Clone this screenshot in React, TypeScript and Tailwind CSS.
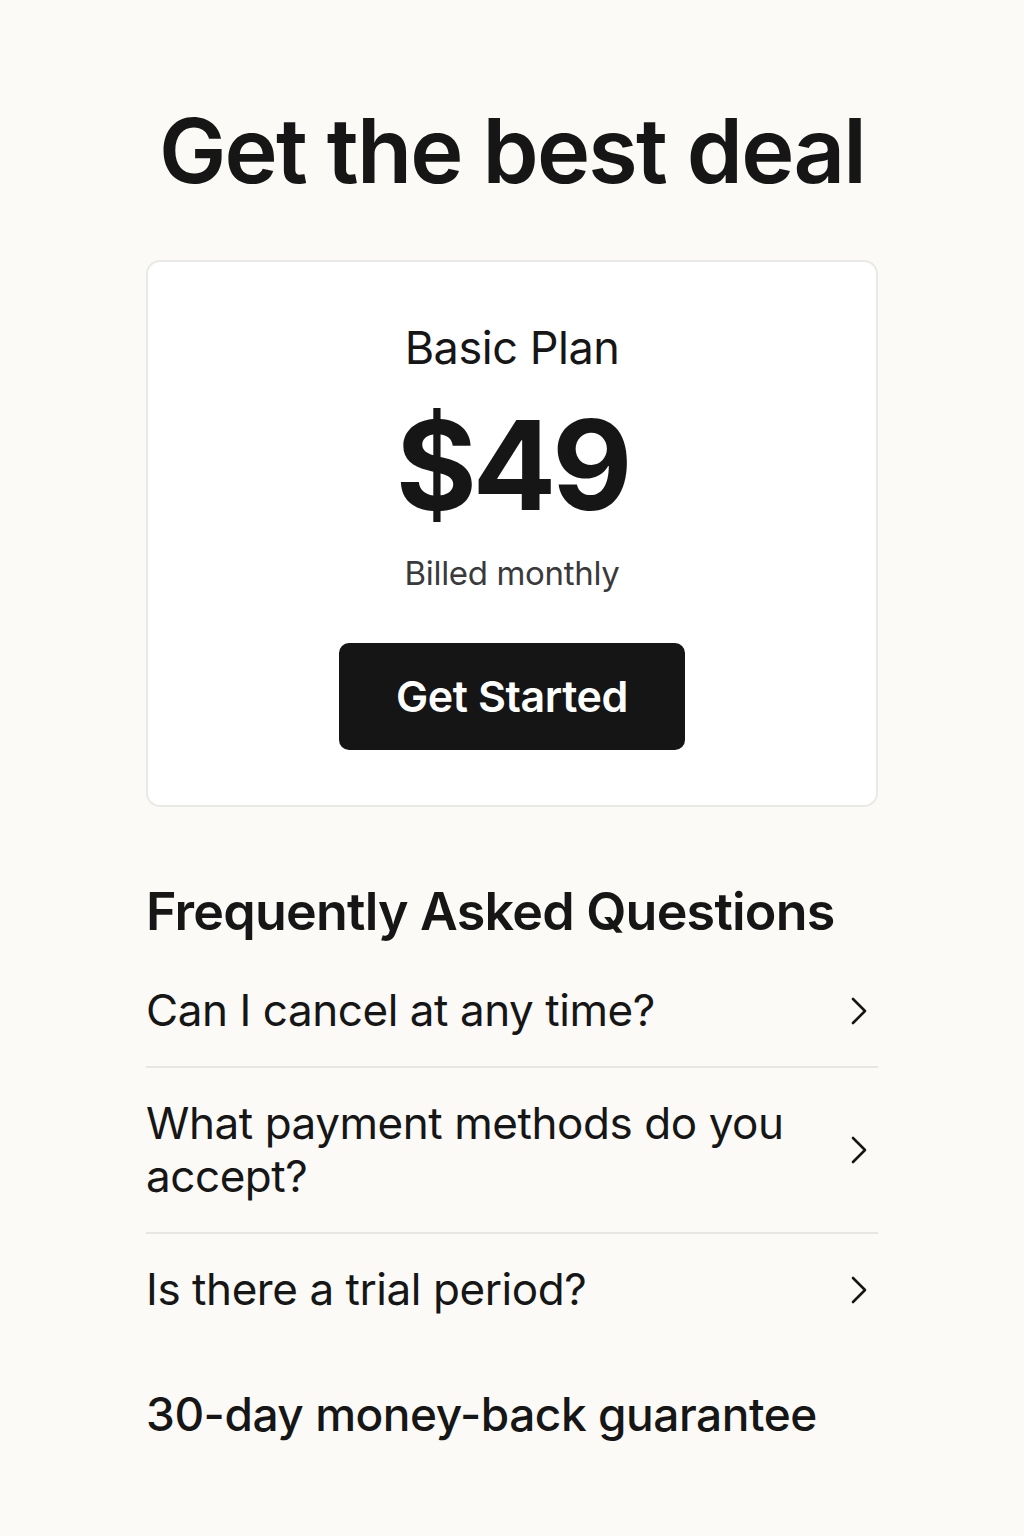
import React from 'react';

const faqs = [
  'Can I cancel at any time?',
  'What payment methods do you accept?',
  'Is there a trial period?',
];

const Chevron = () => (
  <svg width="18" height="30" viewBox="0 0 18 30" fill="none" className="shrink-0">
    <polyline
      points="3,3 15,15 3,27"
      stroke="#161616"
      strokeWidth="2.6"
      strokeLinecap="round"
      strokeLinejoin="round"
    />
  </svg>
);

export default function App() {
  return (
    <div
      className="min-h-[1536px] bg-[#fbfaf7] text-[#161616] pt-[106px] pb-20"
      style={{ fontFamily: 'Inter, "Noto Sans", sans-serif' }}
    >
      <div className="w-[732px] mx-auto">
        {/* Title */}
        <h1 className="text-[90px] font-semibold leading-none tracking-[-0.02em] text-center">
          Get the best deal
        </h1>

        {/* Pricing card */}
        <div className="mt-[64px] bg-white border-2 border-[#e9e9e8] rounded-[14px] flex flex-col items-center pt-[63px] pb-[55px]">
          <h2 className="text-[45px] leading-none font-normal tracking-[-0.01em]">Basic Plan</h2>
          <div className="mt-[33px] text-[124px] leading-none font-bold tracking-[-0.035em]">$49</div>
          <p className="mt-[30px] text-[33px] leading-none text-[#3a3a3c] tracking-[-0.01em]">Billed monthly</p>
          <button className="mt-[53px] w-[346px] h-[107px] rounded-[10px] bg-[#151515] text-white text-[43px] font-semibold tracking-[-0.01em]">
            Get Started
          </button>
        </div>

        {/* FAQ */}
        <h3 className="mt-[79px] text-[52px] leading-none font-semibold tracking-[-0.015em]">
          Frequently Asked Questions
        </h3>
        <div className="mt-[17px]">
          {faqs.map((q, i) => (
            <div
              key={q}
              className={`flex items-center justify-between gap-8 py-[29px] ${
                i < faqs.length - 1 ? 'border-b-2 border-[#e6e6e4]' : ''
              }`}
            >
              <span className="text-[44px] leading-[53px] tracking-[-0.01em]">{q}</span>
              <div className="pr-[10px]">
                <Chevron />
              </div>
            </div>
          ))}
        </div>

        <p className="mt-[46px] text-[46px] leading-none font-medium tracking-[-0.01em]">
          30-day money-back guarantee
        </p>
      </div>
    </div>
  );
}
